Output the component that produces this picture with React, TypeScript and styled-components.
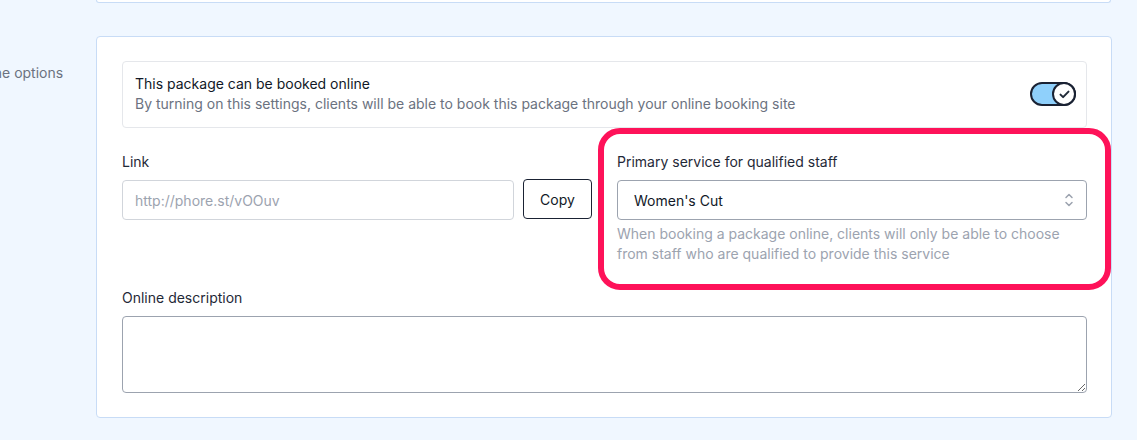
import React from "react";
import styled, { createGlobalStyle } from "styled-components";

const GlobalStyle = createGlobalStyle`
  html, body {
    margin: 0;
    background: #f0f7ff;
    font-family: "Inter", "Noto Sans", sans-serif;
    overflow: hidden;
  }
`;

export default function App() {
  return (
    <Page>
      <GlobalStyle />
      <TopCard />
      <Section>
        <SectionLabel>Online options</SectionLabel>
        <Card>
          <ToggleBox>
            <ToggleText>
              <ToggleTitle>This package can be booked online</ToggleTitle>
              <ToggleHint>
                By turning on this settings, clients will be able to book this package through your
                online booking site
              </ToggleHint>
            </ToggleText>
            <Switch role="switch" aria-checked="true">
              <Knob>
                <svg width="11" height="9" viewBox="0 0 11 9" fill="none">
                  <path d="M1.5 4.6 4.1 7.1 9.5 1.6" stroke="#1f2937" strokeWidth="2" strokeLinecap="round" strokeLinejoin="round" />
                </svg>
              </Knob>
            </Switch>
          </ToggleBox>

          <Columns>
            <Field>
              <Label>Link</Label>
              <LinkRow>
                <TextInput placeholder="http://phore.st/vOOuv" readOnly />
                <CopyButton>Copy</CopyButton>
              </LinkRow>
            </Field>
            <Field>
              <Highlight />
              <Label>Primary service for qualified staff</Label>
              <Select>
                <span>Women's Cut</span>
                <svg width="10" height="16" viewBox="0 0 10 16" fill="none">
                  <path d="M2 5.5 5 2.5 8 5.5M2 10.5 5 13.5 8 10.5" stroke="#9ca3af" strokeWidth="1.5" strokeLinecap="round" strokeLinejoin="round" />
                </svg>
              </Select>
              <Help>
                When booking a package online, clients will only be able to choose from staff who
                are qualified to provide this service
              </Help>
            </Field>
          </Columns>

          <Field>
            <Label>Online description</Label>
            <TextArea />
          </Field>
        </Card>
      </Section>
    </Page>
  );
}

const Page = styled.div`
  width: 1137px;
  height: 440px;
`;

const TopCard = styled.div`
  margin-left: 96px;
  width: 1013px;
  height: 2px;
  background: #fff;
  border: 1px solid #c8dcf6;
  border-top: none;
  border-radius: 0 0 4px 4px;
`;

const Section = styled.section`
  display: flex;
  margin-top: 33px;
  margin-left: -32px;
`;

const SectionLabel = styled.div`
  width: 128px;
  flex-shrink: 0;
  padding-top: 27px;
  font-size: 14px;
  line-height: 20px;
  color: #6b7280;
`;

const Card = styled.div`
  width: 965px;
  background: #fff;
  border: 1px solid #c8dcf6;
  border-radius: 4px;
  padding: 24px 24px 24px 25px;
  display: flex;
  flex-direction: column;
  gap: 24px;
`;

const ToggleBox = styled.div`
  display: flex;
  align-items: center;
  justify-content: space-between;
  border: 1px solid #e5e7eb;
  border-radius: 4px;
  padding: 12px 10px 13px 12px;
`;

const ToggleText = styled.div`
  display: flex;
  flex-direction: column;
`;

const ToggleTitle = styled.div`
  font-size: 14px;
  line-height: 20px;
  color: #111827;
`;

const ToggleHint = styled.div`
  font-size: 14px;
  line-height: 20px;
  color: #6b7280;
`;

const Switch = styled.div`
  box-sizing: border-box;
  width: 46px;
  height: 24px;
  border: 2px solid #1a2233;
  border-radius: 12px;
  background: #8fd0fb;
  display: flex;
  justify-content: flex-end;
  align-items: center;
`;

const Knob = styled.div`
  box-sizing: border-box;
  width: 24px;
  height: 24px;
  margin-right: -2px;
  border: 2px solid #1a2233;
  border-radius: 50%;
  background: #fff;
  display: flex;
  align-items: center;
  justify-content: center;
`;

const Columns = styled.div`
  display: grid;
  grid-template-columns: 1fr 1fr;
  gap: 25px;
`;

const Field = styled.div`
  position: relative;
  display: flex;
  flex-direction: column;
`;

const Label = styled.label`
  font-size: 14px;
  line-height: 20px;
  color: #1f2937;
  margin-bottom: 8px;
`;

const LinkRow = styled.div`
  display: flex;
  gap: 9px;
  align-items: flex-start;
`;

const TextInput = styled.input`
  flex: 1;
  min-width: 0;
  height: 40px;
  box-sizing: border-box;
  border: 1px solid #d1d5db;
  border-radius: 4px;
  padding: 0 12px;
  font-family: inherit;
  font-size: 14px;
  color: #111827;
  outline: none;

  &::placeholder {
    color: #9ca3af;
  }
`;

const CopyButton = styled.button`
  height: 40px;
  margin-top: -1px;
  width: 69px;
  box-sizing: border-box;
  background: #fff;
  border: 1.5px solid #1a2233;
  border-radius: 4px;
  font-family: inherit;
  font-size: 14px;
  color: #111827;
`;

const Select = styled.div`
  height: 40px;
  box-sizing: border-box;
  border: 1px solid #9ca3af;
  border-radius: 4px;
  padding: 0 12px 0 16px;
  display: flex;
  align-items: center;
  justify-content: space-between;
  font-size: 14px;
  color: #111827;
`;

const Help = styled.p`
  margin: 4px 0 0;
  font-size: 14px;
  line-height: 20px;
  color: #9ca3af;
`;

const Highlight = styled.div`
  position: absolute;
  left: -19px;
  right: -24px;
  top: -24px;
  bottom: -26px;
  border: 6px solid #fe1259;
  border-radius: 22px;
  pointer-events: none;
`;

const TextArea = styled.textarea`
  height: 77px;
  box-sizing: border-box;
  border: 1px solid #9ca3af;
  border-radius: 4px;
  font-family: inherit;
  font-size: 14px;
  outline: none;
`;
